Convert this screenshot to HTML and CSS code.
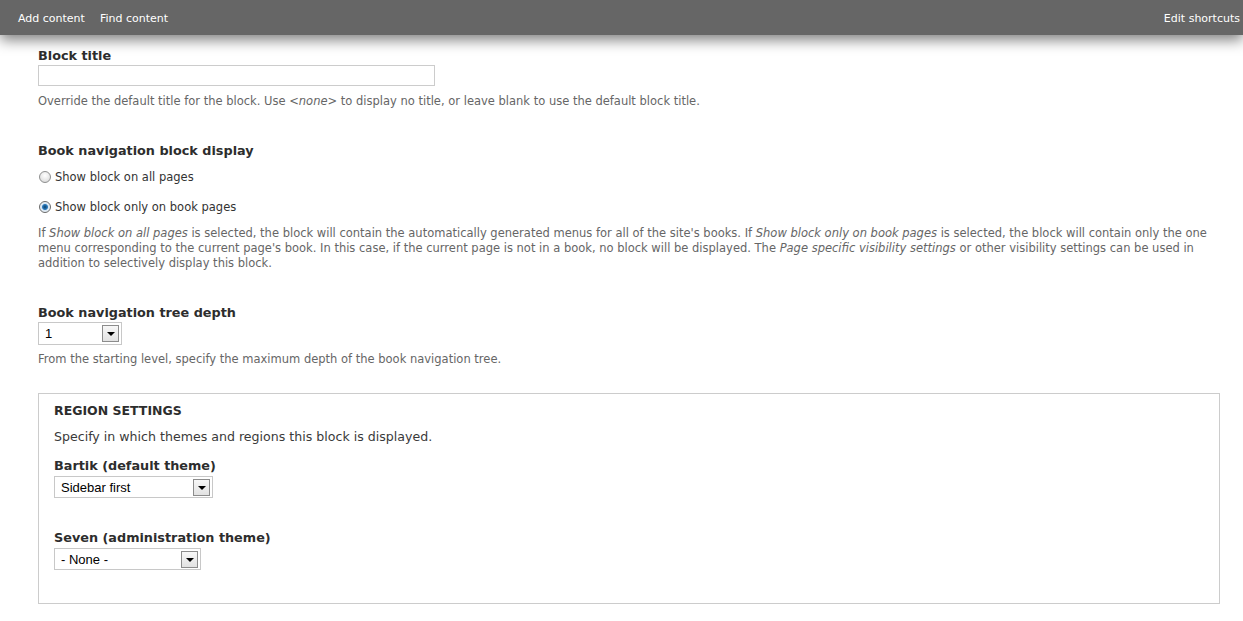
FILE: index.html
```html
<!DOCTYPE html>
<html lang="en">
<head>
    <meta charset="UTF-8">
    <title>Configure block</title>
    <link rel="stylesheet" href="styles.css">
</head>
<body>
    <div id="toolbar">
        <div class="shortcuts">
            <a href="#">Add content</a>
            <a href="#">Find content</a>
        </div>
        <a class="edit-shortcuts" href="#">Edit shortcuts</a>
    </div>

    <form id="page">
        <div class="form-item item-title">
            <label for="title">Block title</label>
            <input type="text" id="title" class="form-text">
            <div class="description">Override the default title for the block. Use <em>&lt;none&gt;</em> to display no title, or leave blank to use the default block title.</div>
        </div>

        <div class="form-item item-radios">
            <label>Book navigation block display</label>
            <div class="radio-row">
                <input type="radio" name="mode" id="mode-all" class="form-radio">
                <span>Show block on all pages</span>
            </div>
            <div class="radio-row">
                <input type="radio" name="mode" id="mode-book" class="form-radio" checked>
                <span>Show block only on book pages</span>
            </div>
            <div class="description">If <em>Show block on all pages</em> is selected, the block will contain the automatically generated menus for all of the site's books. If <em>Show block only on book pages</em> is selected, the block will contain only the one menu corresponding to the current page's book. In this case, if the current page is not in a book, no block will be displayed. The <em>Page specific visibility settings</em> or other visibility settings can be used in addition to selectively display this block.</div>
        </div>

        <div class="form-item item-depth">
            <label for="depth">Book navigation tree depth</label>
            <div class="select depth">
                <select id="depth"><option>1</option></select>
                <span class="arrow"></span>
            </div>
            <div class="description">From the starting level, specify the maximum depth of the book navigation tree.</div>
        </div>

        <div class="fieldset">
            <div class="legend">Region settings</div>
            <div class="fieldset-description">Specify in which themes and regions this block is displayed.</div>
            <div class="form-item item-bartik">
                <label for="bartik">Bartik (default theme)</label>
                <div class="select bartik">
                    <select id="bartik"><option>Sidebar first</option></select>
                    <span class="arrow"></span>
                </div>
            </div>
            <div class="form-item item-seven">
                <label for="seven">Seven (administration theme)</label>
                <div class="select seven">
                    <select id="seven"><option>- None -</option></select>
                    <span class="arrow"></span>
                </div>
            </div>
        </div>
    </form>
</body>
</html>
```

FILE: styles.css
```css
* {
    margin: 0;
    padding: 0;
    box-sizing: border-box;
}
body {
    background: #ffffff;
    font-family: "DejaVu Sans", Verdana, sans-serif;
    color: #333333;
    overflow: hidden;
}

/* toolbar */
#toolbar {
    position: relative;
    z-index: 2;
    height: 35px;
    background: #666666;
    box-shadow: 0 5px 14px rgba(0,0,0,.5);
    display: flex;
    justify-content: space-between;
    align-items: center;
    padding: 1px 3px 0 18px;
}
#toolbar a {
    color: #ffffff;
    text-decoration: none;
    font-size: 11px;
}
.shortcuts {
    display: flex;
    gap: 15px;
}

/* form */
#page {
    padding: 13px 23px 0 38px;
}
.form-item label {
    display: block;
    font-weight: bold;
    font-size: 12.8px;
    line-height: 16px;
    color: #2d2d2d;
}
.description {
    font-size: 11.5px;
    line-height: 15px;
    color: #666666;
}
.form-text {
    display: block;
    width: 397px;
    height: 21px;
    margin-top: 1px;
    border: 1px solid #cccccc;
    background: #ffffff;
}
.item-title .description {
    margin-top: 8px;
}
.item-radios {
    margin-top: 34px;
}
.radio-row {
    display: flex;
    align-items: center;
    gap: 4px;
    height: 16px;
    font-size: 11.5px;
    color: #333333;
    margin-top: 10px;
}
.radio-row + .radio-row {
    margin-top: 14px;
}
.form-radio {
    appearance: none;
    width: 12px;
    height: 12px;
    border-radius: 50%;
    border: 1px solid #8e8f8f;
    background: radial-gradient(circle at 50% 35%, #ffffff 0, #e6e6e6 60%, #d0d0d0 100%);
    margin-left: 1px;
}
.form-radio:checked {
    background: radial-gradient(circle, #0d3f66 0, #2a7bbf 2.5px, #d8e6f2 3.5px, #ffffff 100%);
    border-color: #6a6a6a;
}
.item-radios .description {
    margin-top: 11px;
    padding-right: 12px;
}
.item-depth {
    margin-top: 34px;
}
.item-depth .description {
    margin-top: 7px;
}

/* select boxes */
.select {
    display: flex;
    align-items: center;
    border: 1px solid #c8c8c8;
    background: #ffffff;
    padding: 0 2px 0 0;
    margin-top: 1px;
}
.select select {
    appearance: none;
    flex: 1;
    min-width: 0;
    border: 0;
    background: transparent;
    font-family: "Liberation Sans", Arial, sans-serif;
    font-size: 13px;
    color: #000000;
    padding-left: 6px;
    outline: none;
}
.arrow {
    width: 17px;
    height: 17px;
    border: 1px solid #8c8c8c;
    background: linear-gradient(#f7f7f7, #e2e2e2);
    display: flex;
    align-items: center;
    justify-content: center;
}
.arrow::after {
    content: "";
    border-left: 4px solid transparent;
    border-right: 4px solid transparent;
    border-top: 4px solid #000000;
    margin-top: 1px;
}
.depth {
    width: 84px;
    height: 23px;
}
.bartik {
    width: 159px;
    height: 22px;
    margin-top: 2px;
}
.seven {
    width: 147px;
    height: 22px;
    margin-top: 2px;
}

/* region settings */
.fieldset {
    margin-top: 26px;
    border: 1px solid #cccccc;
    padding: 9px 15px 33px;
}
.legend {
    font-weight: bold;
    font-size: 12.5px;
    line-height: 16px;
    text-transform: uppercase;
    color: #2d2d2d;
}
.fieldset-description {
    margin-top: 10px;
    font-size: 12.6px;
    line-height: 16px;
    color: #3a3a3a;
}
.item-bartik {
    margin-top: 13px;
}
.item-seven {
    margin-top: 32px;
}
```
